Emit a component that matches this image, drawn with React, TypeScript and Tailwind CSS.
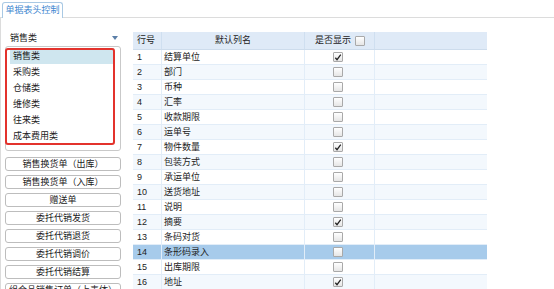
import React from "react";

const categories = ["销售类", "采购类", "仓储类", "维修类", "往来类", "成本费用类"];

const buttons = [
  "销售换货单（出库）",
  "销售换货单（入库）",
  "赠送单",
  "委托代销发货",
  "委托代销退货",
  "委托代销调价",
  "委托代销结算",
  "组合品销售订单（上表体）",
];

const rows: { name: string; checked: boolean }[] = [
  { name: "结算单位", checked: true },
  { name: "部门", checked: false },
  { name: "币种", checked: false },
  { name: "汇率", checked: false },
  { name: "收款期限", checked: false },
  { name: "运单号", checked: false },
  { name: "物件数量", checked: true },
  { name: "包装方式", checked: false },
  { name: "承运单位", checked: false },
  { name: "送货地址", checked: false },
  { name: "说明", checked: false },
  { name: "摘要", checked: true },
  { name: "条码对货", checked: false },
  { name: "条形码录入", checked: false },
  { name: "出库期限", checked: false },
  { name: "地址", checked: true },
];

const CheckBox = ({ checked }: { checked: boolean }) => (
  <span className="flex h-[10px] w-[10px] shrink-0 items-center justify-center rounded-[1px] border border-[#a9a9a9] bg-gradient-to-b from-white to-[#e6e6e6]">
    {checked && (
      <svg width="9" height="9" viewBox="0 0 9 9">
        <path d="M1.5 4.8 L3.4 7 L7.6 1.2" fill="none" stroke="#222" strokeWidth="1.4" />
      </svg>
    )}
  </span>
);

export default function App() {
  return (
    <div
      className="relative h-[289px] w-[554px] overflow-hidden whitespace-nowrap bg-white text-[9px] leading-none text-[#222]"
      style={{ fontFamily: '"Liberation Sans", "Noto Sans CJK SC", sans-serif' }}
    >
      {/* tab bar */}
      <div className="flex h-[18px] items-end border-b border-[#dcdcdc] pl-[2px]">
        <div className="mb-[-1px] flex h-[16px] w-[61px] items-center justify-center rounded-t-[3px] border border-b-0 border-[#a9c9e4] bg-white text-[#3e86cf]">
          单据表头控制
        </div>
      </div>

      <div className="flex h-[271px] overflow-hidden">
        {/* left column */}
        <div className="flex w-[131px] shrink-0 flex-col overflow-hidden border-l border-[#dcdcdc] pl-[4px] pr-[4px]">
          <div className="mt-[12px] flex h-[16px] w-[116px] shrink-0 items-center justify-between pl-[5px] pr-[3px]">
            <span>销售类</span>
            <svg width="6" height="4" viewBox="0 0 6 4">
              <path d="M0 0 L6 0 L3 4 Z" fill="#5b7fa8" />
            </svg>
          </div>

          <div className="relative h-[105px] w-[116px] shrink-0 rounded-[3px] border border-[#c9c9c9]">
            <div className="ml-[4px] mt-[1px] flex flex-col">
              {categories.map((c, i) => (
                <div
                  key={c}
                  className={`flex h-[16px] w-[104px] shrink-0 items-center pl-[3px] ${i === 0 ? "bg-[#cfe6ef]" : ""}`}
                >
                  {c}
                </div>
              ))}
            </div>
            <div className="absolute left-[-1px] top-[1px] h-[97px] w-[110px] rounded-[3px] border-2 border-[#e3322c]" />
          </div>

          <div className="mt-[6px] flex shrink-0 flex-col gap-[4px]">
            {buttons.map((b) => (
              <div
                key={b}
                className="flex h-[14px] w-[116px] shrink-0 items-center justify-center overflow-hidden rounded-[3px] border border-[#bdbdbd] bg-white"
              >
                {b}
              </div>
            ))}
          </div>
        </div>

        {/* grid */}
        <div className="ml-[2px] mt-[14px] flex w-[354px] shrink-0 flex-col self-start">
          <div className="flex h-[18px] shrink-0 border-b border-[#cddcec] bg-[#dfeaf7]">
            <div className="flex w-[29px] items-center border-r border-[#cfdff0] pl-[4px]">行号</div>
            <div className="flex w-[143px] items-center justify-center border-r border-[#cfdff0]">默认列名</div>
            <div className="flex w-[70px] items-center gap-[4px] border-r border-[#cfdff0] pl-[10px]">
              是否显示
              <CheckBox checked={false} />
            </div>
            <div className="flex-1" />
          </div>
          {rows.map((r, i) => {
            const selected = i === 13;
            const bg = selected ? "bg-[#a7cbeb]" : i % 2 === 1 ? "bg-[#f3f8fd]" : "bg-white";
            return (
              <div key={i} className={`flex h-[15px] shrink-0 border-b border-[#e2edf8] ${bg}`}>
                <div className="flex w-[29px] items-center border-r border-[#e2edf8] pl-[4px]">{i + 1}</div>
                <div className="flex w-[143px] items-center border-r border-[#e2edf8] pl-[2px]">{r.name}</div>
                <div className="flex w-[70px] items-center justify-end border-r border-[#e2edf8] pr-[31px]">
                  <CheckBox checked={r.checked} />
                </div>
                <div className="flex-1" />
              </div>
            );
          })}
        </div>
      </div>
    </div>
  );
}
